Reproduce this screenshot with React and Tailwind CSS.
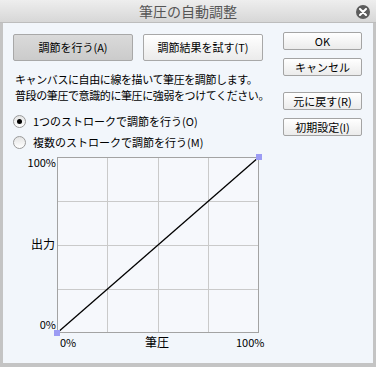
import React from "react";

const font = { fontFamily: '"Noto Sans CJK JP", "Noto Sans", sans-serif' };

function Radio({ checked, label }) {
  return (
    <div className="flex items-center h-[21px]">
      <span className="w-[13px] h-[13px] rounded-full border border-[#9a9a9a] bg-gradient-to-b from-[#e4e4e4] to-white flex items-center justify-center">
        {checked && <span className="w-[5px] h-[5px] rounded-full bg-black" />}
      </span>
      <span className="ml-[7px]">{label}</span>
    </div>
  );
}

function SideButton({ children }) {
  return (
    <button className="w-[79px] h-[18px] flex items-center justify-center border border-[#a4a4a4] rounded-[2px] bg-gradient-to-b from-white to-[#ebebeb] text-[11px] leading-none">
      {children}
    </button>
  );
}

function Chart() {
  return (
    <div className="relative w-[260px] h-[200px] text-[11px] leading-none">
      <svg className="absolute left-[41px] top-[0px]" width="208" height="182" viewBox="-3 -3 208 182">
        <rect x="0" y="0" width="202" height="176" fill="#f6f8fc" />
        {[50.5, 101.5, 151.5].map((x) => (
          <line key={x} x1={x} y1="0" x2={x} y2="176" stroke="#cacaca" strokeWidth="1" />
        ))}
        {[44.5, 88.5, 132.5].map((y) => (
          <line key={y} x1="0" y1={y} x2="202" y2={y} stroke="#cacaca" strokeWidth="1" />
        ))}
        <rect x="0.5" y="0.5" width="201" height="175" fill="none" stroke="#a3a3a3" strokeWidth="1" />
        <line x1="0" y1="176" x2="202" y2="0" stroke="#000" strokeWidth="1.3" />
        <rect x="-3" y="173" width="6" height="6" fill="#9c9cf4" />
        <rect x="199" y="-3" width="6" height="6" fill="#9c9cf4" />
      </svg>
      <span className="absolute right-[217px] top-[3px]">100%</span>
      <span className="absolute right-[218px] top-[84px] text-[12px]">出力</span>
      <span className="absolute right-[217px] top-[165px]">0%</span>
      <span className="absolute left-[47px] top-[183px]">0%</span>
      <span className="absolute left-[132px] top-[182px] text-[12px]">筆圧</span>
      <span className="absolute left-[223px] top-[183px]">100%</span>
    </div>
  );
}

export default function App() {
  return (
    <div className="w-[376px] h-[367px] bg-[#c4c4c4] flex flex-col text-black" style={font}>
      {/* title bar */}
      <div className="h-[23px] shrink-0 relative flex items-center justify-center bg-gradient-to-b from-[#eeeeee] to-[#d7d7d7] border-b border-[#bdbdbd]">
        <span className="text-[14px] text-[#555555] leading-none">筆圧の自動調整</span>
        <span className="absolute right-[6px] top-[5px] w-[14px] h-[14px] rounded-full bg-[#5c5c5c] flex items-center justify-center">
          <svg width="8" height="8" viewBox="0 0 8 8">
            <path d="M1 1L7 7M7 1L1 7" stroke="#fff" strokeWidth="2" strokeLinecap="round" />
          </svg>
        </span>
      </div>

      {/* content */}
      <div className="flex-1 mx-[3px] mb-[4px] bg-[#f2f6fb] flex text-[11px] leading-none">
        <div className="flex flex-col pl-[10px] pt-[11px] w-[275px]">
          <div className="flex gap-[10px]">
            <button className="w-[120px] h-[27px] flex items-center justify-center border border-[#a8a8a8] rounded-[2px] bg-gradient-to-b from-[#dadada] to-[#cbcbcb] text-[11px]">
              調節を行う(A)
            </button>
            <button className="w-[120px] h-[27px] flex items-center justify-center border border-[#a8a8a8] rounded-[2px] bg-gradient-to-b from-white to-[#ebebeb] text-[11px]">
              調節結果を試す(T)
            </button>
          </div>
          <div className="mt-[10px] leading-[16px] tracking-[-0.4px] pl-[2px]">
            <div>キャンバスに自由に線を描いて筆圧を調節します。</div>
            <div>普段の筆圧で意識的に筆圧に強弱をつけてください。</div>
          </div>
          <div className="mt-[8px] flex flex-col">
            <Radio checked label="1つのストロークで調節を行う(O)" />
            <Radio label="複数のストロークで調節を行う(M)" />
          </div>
          <div className="mt-[1px]">
            <Chart />
          </div>
        </div>
        <div className="ml-auto mr-[11px] pt-[9px] flex flex-col gap-[8px]">
          <SideButton>OK</SideButton>
          <SideButton>キャンセル</SideButton>
          <div className="h-0" />
          <SideButton>元に戻す(R)</SideButton>
          <SideButton>初期設定(I)</SideButton>
        </div>
      </div>
    </div>
  );
}
